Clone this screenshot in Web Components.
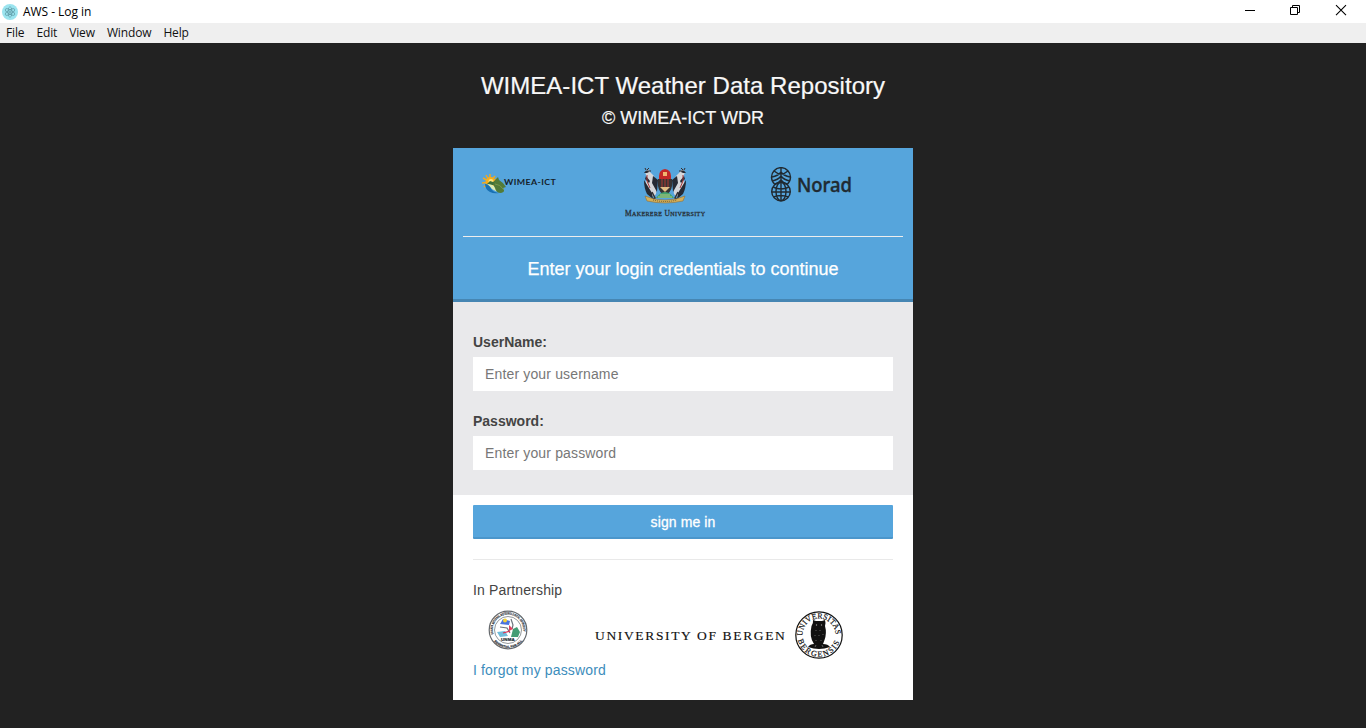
<!DOCTYPE html>
<html lang="en">
<head>
<meta charset="utf-8">
<title>AWS - Log in</title>
<style>
html,body{margin:0;height:100%;overflow:hidden;background:#222}
body{font-family:"Liberation Sans",Arial,sans-serif}
</style>
</head>
<body>
<aws-window></aws-window>
<script>
function define(name, html, setup) {
  const template = document.createElement('template');
  template.innerHTML = html;
  customElements.define(name, class extends HTMLElement {
    constructor() {
      super();
      this.attachShadow({mode: 'open'}).append(template.content.cloneNode(true));
      if (setup) setup(this, this.shadowRoot);
    }
  });
}

define('title-bar', `<style>
:host{display:flex;align-items:center;height:23px;background:#fff;color:#000;font:12px "Open Sans",sans-serif}
.icon{width:16px;height:16px;margin-left:2px}
.title{margin-left:5px;flex:1;letter-spacing:-.04px;line-height:23px}
.controls{display:flex;padding-right:3px}
.controls svg{display:block;width:46px;height:23px}
</style>
<svg class="icon" viewBox="0 0 16 16"><circle cx="8" cy="8" r="8" fill="#9be4ef"/><g fill="none" stroke="#568f9a" stroke-width=".6"><ellipse cx="8" cy="8" rx="5.400" ry="2" transform="rotate(30 8 8)"/><ellipse cx="8" cy="8" rx="5.400" ry="2" transform="rotate(90 8 8)"/><ellipse cx="8" cy="8" rx="5.400" ry="2" transform="rotate(150 8 8)"/></g><circle cx="8" cy="8" r=".8" fill="#4b7985"/></svg>
<span class="title">AWS - Log in</span>
<div class="controls">
<svg viewBox="0 0 46 23"><path d="M20 10.500h10" stroke="#000"/></svg>
<svg viewBox="0 0 46 23"><path d="M19.500 7.500h7v7h-7zM21.500 7.500v-2h7v7h-2" fill="none" stroke="#000"/></svg>
<svg viewBox="0 0 46 23"><path d="M19 5.200l10 10M29 5.200l-10 10" stroke="#000" stroke-width="1.100"/></svg>
</div>`);

define('menu-bar', `<style>
:host{display:flex;gap:12px;height:20px;padding-left:6px;background:#efefef;color:#111;font:12px/20px "Open Sans",sans-serif;letter-spacing:-.14px}
::slotted(span){white-space:nowrap}
</style><slot></slot>`);

define('wimea-logo', `<style>:host,svg{display:block}</style>
<svg width="76" height="22" viewBox="0 0 76 22">
<g stroke="#efaa22" stroke-width="1.500"><path d="M8 8L1 4M8 8L4 1M8 8L8 0M8 8L13 2M8 8L0 9M8 8L2 13M8 8L15 5"/></g>
<circle cx="8.500" cy="8" r="5" fill="#f7ae1b"/><circle cx="9" cy="7.500" r="2.500" fill="#ffe177"/>
<path d="M5 10l3-3 3 1 3-2v5H5z" fill="#3d713b"/>
<path d="M3 10q5 0 6 4t8 5q-5 1-9-1-5-3-5-8" fill="#1770b4"/>
<path d="M5 10q6 0 9 4t5 4q-5 0-9-3-2-3-5-5" fill="#ddecb6"/>
<path d="M11 10q1-4 5-7l1 3q5 3 7 7l-3 1q3 4-2 5-5 0-6-5z" fill="#527b38"/>
<path d="M13 10q5 0 9 6" stroke="#78964b" fill="none"/>
<text transform="translate(22 11) scale(1.150 1)" font-family="Lato,sans-serif" font-weight="700" font-size="7.700" textLength="45" fill="#15212a">WIMEA-ICT</text>
</svg>`);

define('makerere-logo', `<style>:host,svg{display:block}</style>
<svg width="82" height="52" viewBox="0 0 82 52">
<g transform="translate(-1 0)">
<g id="bird"><path d="M21 5q3-5 5 0l4 4 3 9-1 9-3 3-5-7q-4-7-1-12z" fill="#d5d6d9"/>
<path d="M20 6q3-5 5-1l-2 1zM20 13l8 13 1 6-6-5q-3-6-3-14M29 9l5 4-1 12-5-9zM22 9l4 5-1 2-4-4z" fill="#252a34"/>
<path d="M23 3l2-2M22 3l-1-2M24 4h3" stroke="#352c2c"/><path d="M23 8v6l3 7" stroke="#a6393a" fill="none"/>
<path d="M28 25l3 6-4 2" stroke="#363435" stroke-width="1.500" fill="none"/></g>
<use href="#bird" transform="matrix(-1 0 0 1 82 0)"/>
<path d="M35 9q0-6 6-7 6 1 6 7v3H35z" fill="#c22928"/><path d="M39 5h4v4h-4z" fill="#f1b66f"/>
<path d="M34 12h14v7q-1 7-7 9-6-2-7-9z" fill="#363333"/><path d="M38 12v8M41 12v8M44 12v8" stroke="#b03831"/><path d="M36 20h10l-5 5z" fill="#e3bd86"/>
<path d="M32 31q4-6 9-6t9 6z" fill="#43a36d"/><path d="M36 28h10M34 30h14" stroke="#b6c780"/>
<path d="M21 29l9 3q11 2 22 0l9-3-2 5q-18 4-36 0z" fill="#d5af58" stroke="#8d703c" stroke-width=".6"/><path d="M29 33q12 3 24 0" stroke="#685730" stroke-dasharray="1 1" fill="none"/>
</g>
<text x="0" y="49" textLength="80" font-family="Liberation Serif,serif" fill="#28323b" stroke="#28323b" stroke-width=".3" font-size="7.500">M<tspan font-size="6">AKERERE</tspan> U<tspan font-size="6">NIVERSITY</tspan></text>
</svg>`);

define('norad-logo', `<style>:host,svg{display:block}</style>
<svg width="84" height="36" viewBox="0 0 84 36">
<g fill="none" stroke="#202a31" stroke-width="1.400">
<path d="M5 17.500a9.500 9.500 0 1 1 12 0"/><circle cx="11" cy="24.500" r="9.300"/>
<path d="M11 1v33M4 4q7 6 14 0M2 10q6-1 9-5 3 4 9 5M2 14q6-1 9-5 3 4 9 5M5 17q4-1 6-4 2 3 6 4M3 20q8 4 16 0M1.500 25h19M3.500 30q7-3 15 0"/>
<ellipse cx="11" cy="24.500" rx="5" ry="9.300"/>
</g><text x="27" y="25" font-family="Noto Sans,sans-serif" font-weight="500" font-size="19" textLength="55" lengthAdjust="spacingAndGlyphs" fill="#202a31" stroke="#202a31" stroke-width=".4">Norad</text>
</svg>`);

define('unma-logo', `<style>:host,svg{display:block}</style>
<svg width="40" height="40" viewBox="0 0 40 40">
<circle cx="20" cy="20" r="18.800" fill="#fff" stroke="#65696d" stroke-width="1.200"/><circle cx="20" cy="20" r="13.500" fill="#fff" stroke="#777d82" stroke-width=".8"/>
<path id="unma-top" d="M5.400 24A15.200 15.200 0 1 1 34.600 24" fill="none"/><path id="unma-bottom" d="M3 25A17.700 17.700 0 0 0 37 25" fill="none"/>
<g font-family="Liberation Sans,sans-serif" font-weight="700" fill="#3d454c" stroke="#3d454c" stroke-width=".25"><text font-size="3.200"><textPath href="#unma-top" textLength="53" lengthAdjust="spacingAndGlyphs">UGANDA NATIONAL METEOROLOGICAL AUTHORITY</textPath></text><text font-size="2.900"><textPath href="#unma-bottom" startOffset="7" textLength="32">ESSENTIAL FOR ALL</textPath></text></g>
<path d="M12 14l3-5 7 2-1 4z" fill="#4a73e0"/><circle cx="17" cy="10.500" r="2" fill="#f4d437"/>
<path d="M12 17l7 1 3 5M23 9l2 6-1 4" stroke="#6c747c" stroke-width="1.200" fill="none"/><path d="M21 15l4 4-4 2z" fill="#df405e"/>
<path d="M9 22l8-1 3 5-8 1z" fill="#70bddb"/><path d="M23 27l2-8 4-2 3 5-2 5z" fill="#439c74"/><path d="M15 23l7-2" stroke="#d93254" stroke-width="1.300"/>
<text x="13" y="31" textLength="14" lengthAdjust="spacingAndGlyphs" font-family="Liberation Sans,sans-serif" font-weight="700" font-size="4.200" fill="#262f38" stroke="#262f38" stroke-width=".2">UNMA</text>
</svg>`);

define('bergen-logo', `<style>:host,svg{display:block}</style>
<svg width="250" height="50" viewBox="0 0 250 50">
<text x="1" y="29.500" textLength="190" lengthAdjust="spacing" font-family="Liberation Serif,serif" font-size="13.500" fill="#111" stroke="#111" stroke-width=".15">UNIVERSITY OF BERGEN</text>
<circle cx="225" cy="25" r="23.200" fill="#fff" stroke="#111" stroke-width="1.200"/>
<path id="seal-top" d="M208.500 27A16.600 16.600 0 1 1 241.500 27" fill="none"/><path id="seal-bottom" d="M203.500 28A21.700 21.700 0 0 0 246.500 28" fill="none"/>
<g font-family="Liberation Serif,serif" font-size="8" fill="#111" stroke="#111" stroke-width=".2"><text><textPath href="#seal-top" startOffset="1" textLength="52" lengthAdjust="spacingAndGlyphs">UNIVERSITAS</textPath></text><text><textPath href="#seal-bottom" startOffset="2" textLength="56">BERGENSIS</textPath></text></g>
<path d="M219 10l3 1h6l3-1q1 3 0 6 2 7-.5 14l-1.500 4q5 0 7 3-11 4-22 0 2-3 6-3-5-7-2.500-18 2-3 1.500-6" fill="#111"/>
<g fill="#999"><circle cx="222.500" cy="15" r=".7"/><circle cx="227.500" cy="15" r=".7"/></g><path d="M222 20v1M226 20v1M221 25v1M225 25v1M229 24v1M222 30v1M227 30v1M222 35l-1 2M228 35l1 2" stroke="#999" stroke-width=".6"/>
</svg>`);

define('logo-row', `<style>
:host{display:grid;grid-template-columns:143px 145px 1fr;align-items:start;height:89px;margin:0 10px;padding-left:19px;box-sizing:border-box;border-bottom:1px solid #eee}
::slotted(wimea-logo){margin-top:26px}::slotted(makerere-logo),::slotted(norad-logo){margin-top:19px}
</style><slot></slot>`);

define('form-field', `<style>
:host{display:block}label{display:block;font-size:14px;font-weight:700;line-height:20px;color:#444;margin-bottom:5px}
input{display:block;box-sizing:border-box;width:100%;height:34px;border:0;padding:6px 12px;background:#fff;color:#555;font:14px "Liberation Sans",sans-serif;letter-spacing:.15px}
input::placeholder{color:#777;opacity:1}
</style><label><slot></slot></label><input>`, (host, root) => {
  const input = root.querySelector('input');
  input.placeholder = host.getAttribute('hint');
  input.type = host.getAttribute('type') || 'text';
});

define('login-card', `<style>
:host{display:block;width:460px;margin:0 auto;background:#fff;color:#444}
header{box-sizing:border-box;height:154px;background:#56a5dc;border-bottom:3px solid #4686b3}
h2{margin:0;color:#fff;text-align:center;font-size:18px;line-height:26px;font-weight:400;padding-top:19px;-webkit-text-stroke:.25px #fff}
.fields{box-sizing:border-box;height:193px;padding:30px 20px 25px;background:#e9e9eb;display:grid;gap:20px}
footer{padding:10px 20px 20px;box-sizing:border-box;height:205px;font-size:14px;line-height:20px;letter-spacing:.15px}
button{display:block;box-sizing:border-box;width:100%;height:34px;border:0;border-bottom:2px solid #4b96cb;border-radius:1px;padding:2px 0 0;background:#56a5dc;color:#fff;font:14px "Liberation Sans",sans-serif;letter-spacing:.1px;-webkit-text-stroke:.3px #fff}
hr{height:1px;border:0;background:#e9e9e9;margin:20px 0}
p{margin:0}.partners{display:flex;height:50px;gap:66px;padding-left:15px;margin-top:10px}
a{display:block;color:#3c8dbc;text-decoration:none}
</style>
<header><logo-row><wimea-logo></wimea-logo><makerere-logo></makerere-logo><norad-logo></norad-logo></logo-row><h2>Enter your login credentials to continue</h2></header>
<div class="fields"><form-field hint="Enter your username">UserName:</form-field><form-field hint="Enter your password" type="password">Password:</form-field></div>
<footer><button>sign me in</button><hr><p>In Partnership</p><div class="partners"><unma-logo></unma-logo><bergen-logo></bergen-logo></div><a>I forgot my password</a></footer>`);

define('page-heading', `<style>
:host{display:block;height:105px;text-align:center;color:#f8f8f8}
h1{font-size:24px;line-height:30px;font-weight:400;margin:0;padding-top:28px;letter-spacing:.03px;-webkit-text-stroke:.2px #f8f8f8}
p{font-size:18px;line-height:24px;margin:5px 0 0;-webkit-text-stroke:.2px #f8f8f8}
</style><h1><slot></slot></h1><p>© WIMEA-ICT WDR</p>`);

define('aws-window', `<style>:host{display:block;height:728px;background:#222}</style>
<title-bar></title-bar><menu-bar><span>File</span><span>Edit</span><span>View</span><span>Window</span><span>Help</span></menu-bar>
<page-heading>WIMEA-ICT Weather Data Repository</page-heading><login-card></login-card>`);
</script>
</body>
</html>
